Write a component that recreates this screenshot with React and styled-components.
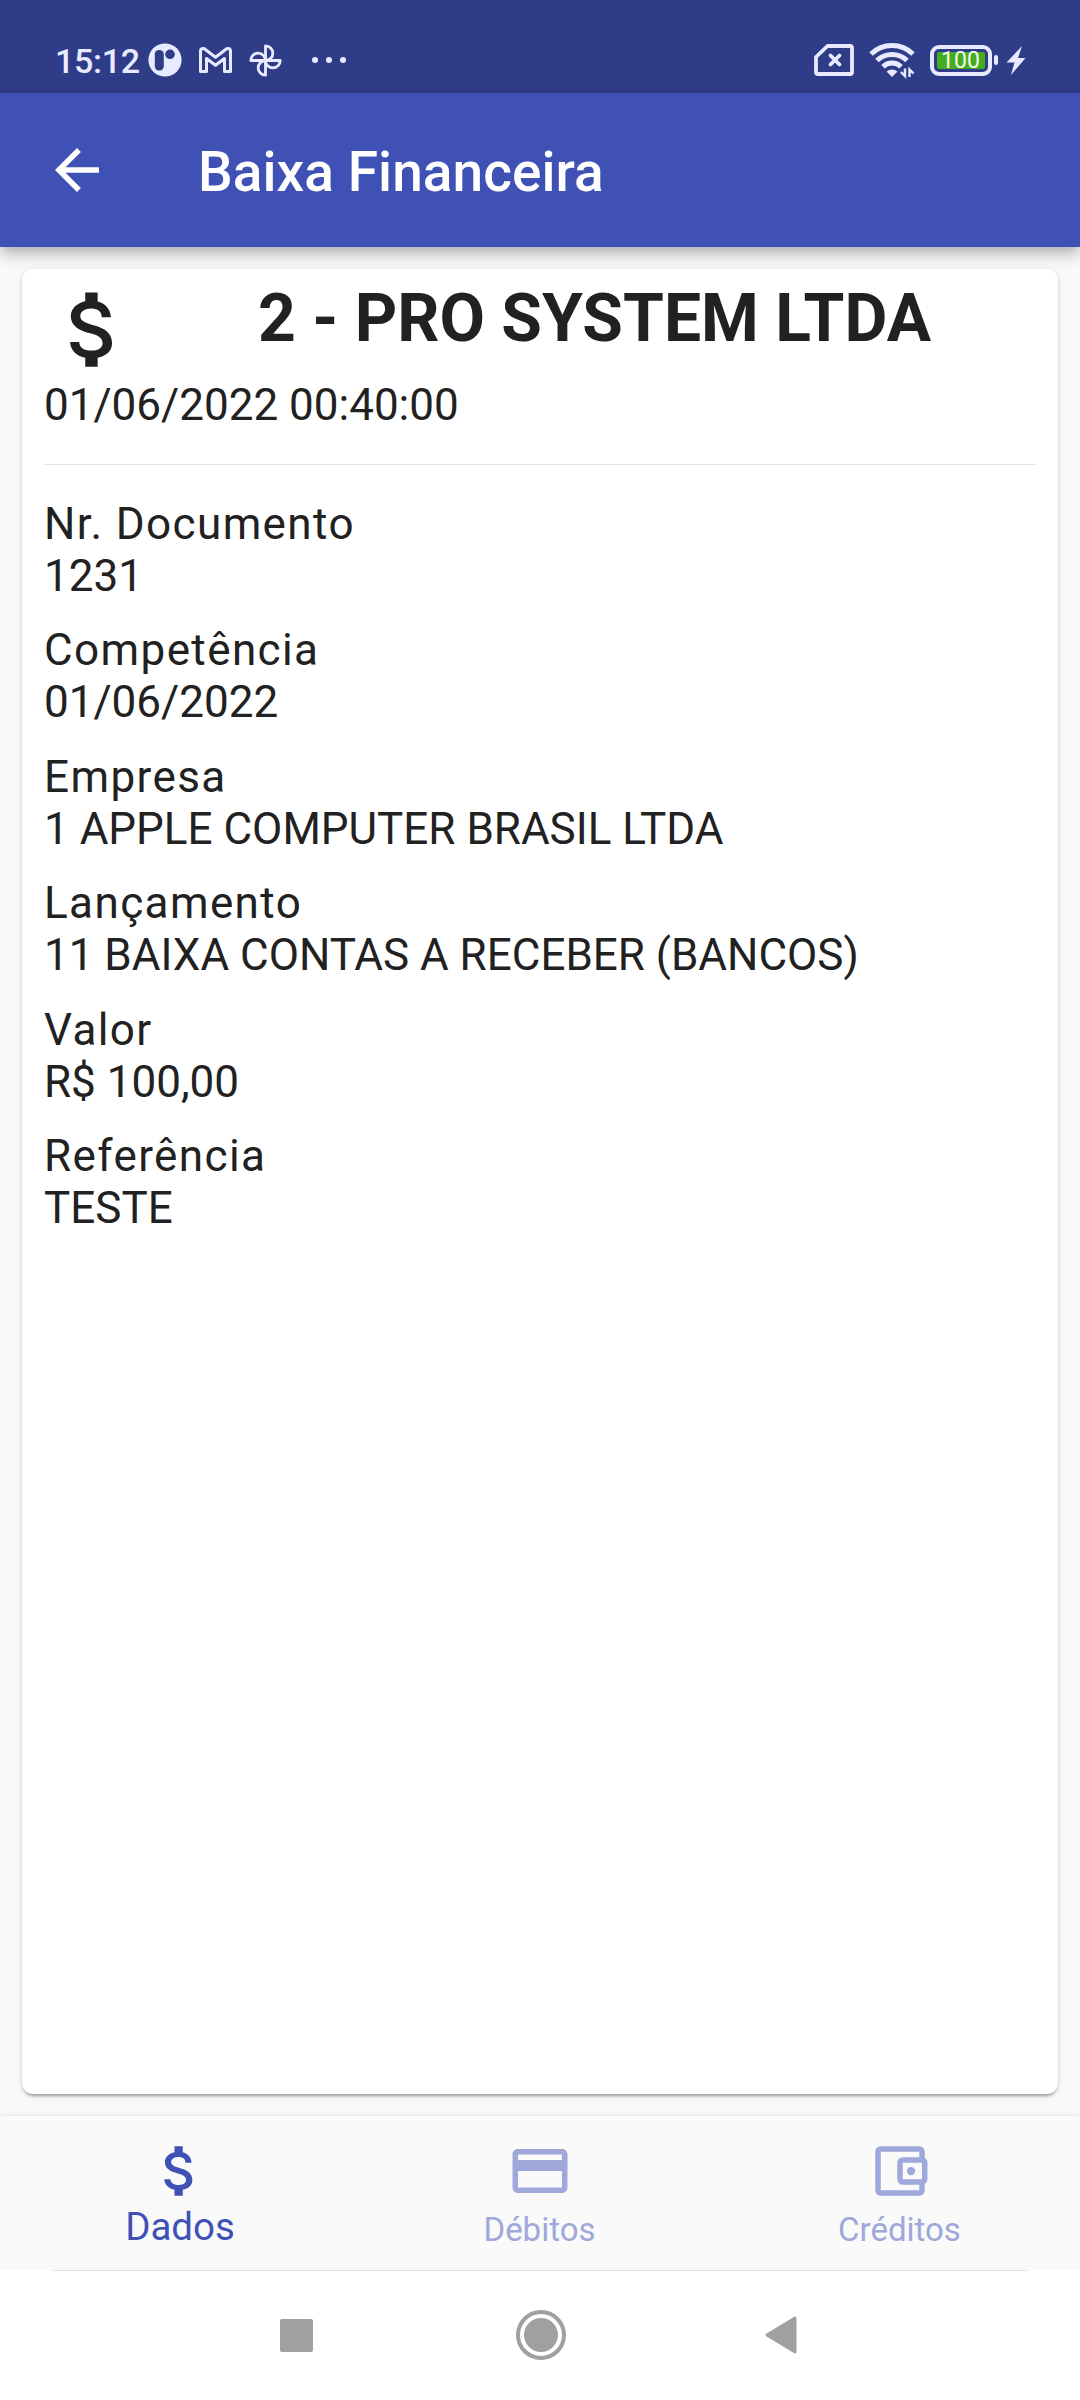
import React from "react";
import styled, { createGlobalStyle } from "styled-components";

const GlobalStyle = createGlobalStyle`
  * { box-sizing: border-box; }
  body {
    margin: 0;
    background: #fafafa;
    font-family: Roboto, "Liberation Sans", sans-serif;
  }
`;

const Screen = styled.div`
  display: flex;
  flex-direction: column;
  width: 1080px;
  height: 2400px;
  overflow: hidden;
  background: #fafafa;
  color: #212121;
`;

const StatusBar = styled.header`
  display: flex;
  justify-content: space-between;
  flex: none;
  height: 93px;
  padding: 43px 54px 0 55px;
  background: #2f3c88;
  color: #e8ebff;
`;

const StatusGroup = styled.div`
  display: flex;
  align-items: center;
  height: 34px;
`;

const Clock = styled.span`
  width: 93px;
  padding-top: 2px;
  font-size: 34px;
  font-weight: 500;
  line-height: 34px;
  letter-spacing: -0.3px;
  white-space: nowrap;
`;

const Glyph = styled.svg`
  display: block;
  flex: none;
  width: ${(p) => p.$w}px;
  height: ${(p) => p.$h}px;
  margin-left: ${(p) => p.$gap || 0}px;
  overflow: visible;
`;

const Battery = styled.div`
  display: flex;
  align-items: center;
  margin-left: 15px;
`;

const BatteryShell = styled.div`
  display: flex;
  width: 62px;
  height: 31px;
  padding: 3px;
  border: 4px solid #e8ebff;
  border-radius: 9px;
`;

const BatteryCharge = styled.div`
  display: flex;
  align-items: center;
  justify-content: center;
  flex: 1;
  border-radius: 2px;
  background: #45ad1c;
  color: #f1fbef;
  font-size: 23px;
  font-weight: 400;
  line-height: 17px;
`;

const BatteryTip = styled.div`
  width: 4px;
  height: 10px;
  margin-left: 2px;
  border-radius: 2px;
  background: #e8ebff;
`;

const AppBar = styled.nav`
  position: relative;
  display: flex;
  align-items: center;
  flex: none;
  gap: 88px;
  height: 154px;
  padding: 0 44px;
  background: #3f51b5;
  color: #fff;
  box-shadow: 0 5px 11px -3px rgba(0, 0, 0, 0.2), 0 11px 14px 0 rgba(0, 0, 0, 0.1), 0 3px 20px 0 rgba(0, 0, 0, 0.1);
`;

const AppTitle = styled.h1`
  margin: 0;
  padding-top: 3px;
  font-size: 55px;
  font-weight: 500;
  line-height: 64px;
  letter-spacing: 0.06px;
`;

const Content = styled.main`
  display: flex;
  flex: 1;
  padding: 22px;
`;

const Card = styled.section`
  flex: 1;
  padding: 11px 22px;
  border-radius: 11px;
  background: #fff;
  box-shadow: 0 5px 3px -3px rgba(0, 0, 0, 0.2), 0 2px 3px 0 rgba(0, 0, 0, 0.14), 0 2px 8px 0 rgba(0, 0, 0, 0.1);
`;

const CardHeader = styled.div`
  display: flex;
  height: 99px;
`;

const PartnerName = styled.h2`
  flex: 1;
  margin: 0 0 0 10px;
  font-size: 66px;
  font-weight: 700;
  line-height: 77px;
  text-align: center;
  white-space: nowrap;
`;

const Timestamp = styled.p`
  margin: 0;
  font-size: 44px;
  line-height: 52px;
`;

const Divider = styled.hr`
  height: 1px;
  margin: 33px 0;
  border: 0;
  background: #e2e2e2;
`;

const Field = styled.div`
  height: 126.4px;
`;

const FieldLabel = styled.div`
  font-size: 44px;
  line-height: 52px;
  letter-spacing: 1.4px;
`;

const FieldValue = styled.div`
  font-size: 44px;
  line-height: 52px;
`;

const TabBar = styled.nav`
  display: flex;
  flex: none;
  height: 154px;
  background: #fafafa;
  box-shadow: 0 -2px 3px rgba(0, 0, 0, 0.07);
`;

const Tab = styled.div`
  display: flex;
  flex: 1;
  flex-direction: column;
  align-items: center;
  padding-top: 22px;
  color: ${(p) => (p.$active ? "#3f51b5" : "#9fa8da")};
`;

const TabLabel = styled.span`
  margin-top: ${(p) => (p.$active ? 0 : 6)}px;
  margin-right: ${(p) => (p.$active ? 0 : 1)}px;
  font-size: ${(p) => (p.$active ? 38.5 : 33)}px;
  line-height: ${(p) => (p.$active ? 45 : 39)}px;
`;

const SystemBar = styled.footer`
  display: flex;
  flex: none;
  flex-direction: column;
  align-items: center;
  height: 130px;
  background: #fff;
`;

const SystemLine = styled.div`
  width: 974px;
  height: 1px;
  background: #e0e0e0;
`;

const SystemButtons = styled.div`
  display: flex;
  align-items: center;
  width: 100%;
  height: 128px;
  padding-left: 279.5px;
`;

const moneyPath =
  "M11.8 10.9c-2.27-.59-3-1.2-3-2.15 0-1.09 1.01-1.85 2.7-1.85 1.78 0 2.44.85 2.5 2.1h2.21c-.07-1.72-1.12-3.3-3.21-3.81V3h-3v2.16c-1.94.42-3.5 1.68-3.5 3.61 0 2.31 1.91 3.46 4.7 4.13 2.5.6 3 1.48 3 2.41 0 .69-.49 1.79-2.7 1.79-2.06 0-2.87-.92-2.98-2.1h-2.2c.12 2.19 1.76 3.42 3.68 3.83V21h3v-2.15c1.95-.37 3.5-1.5 3.5-3.55 0-2.84-2.43-3.81-4.7-4.4z";

const MoneyIcon = ({ size }) => (
  <Glyph $w={size} $h={size} viewBox="0 0 24 24" fill="currentColor">
    <path d={moneyPath} />
  </Glyph>
);

const CardIcon = () => (
  <Glyph $w={66} $h={66} viewBox="0 0 24 24" fill="currentColor">
    <path d="M20 4H4c-1.11 0-1.99.89-1.99 2L2 18c0 1.11.89 2 2 2h16c1.11 0 2-.89 2-2V6c0-1.11-.89-2-2-2zm0 14H4v-6h16v6zm0-10H4V6h16v2z" />
  </Glyph>
);

const WalletIcon = () => (
  <Glyph $w={66} $h={66} viewBox="0 0 24 24" fill="none" stroke="currentColor" strokeWidth="2">
    <path d="M20 7.5V5a1 1 0 0 0-1-1H5a1 1 0 0 0-1 1v14a1 1 0 0 0 1 1h14a1 1 0 0 0 1-1v-2.5" />
    <rect x="12" y="8" width="9" height="8" rx="1" />
    <circle cx="16" cy="12" r="1.5" fill="currentColor" stroke="none" />
  </Glyph>
);

const fields = [
  ["Nr. Documento", "1231"],
  ["Competência", "01/06/2022"],
  ["Empresa", "1 APPLE COMPUTER BRASIL LTDA"],
  ["Lançamento", "11 BAIXA CONTAS A RECEBER (BANCOS)"],
  ["Valor", "R$ 100,00"],
  ["Referência", "TESTE"],
];

export default function App() {
  return (
    <Screen>
      <GlobalStyle />
      <StatusBar>
        <StatusGroup>
          <Clock>15:12</Clock>
          <Glyph $w={34} $h={34} viewBox="0 0 34 34">
            <circle cx="17" cy="17" r="16.6" fill="currentColor" />
            <rect x="6.8" y="7" width="9" height="20.5" rx="4.2" fill="#2f3c88" />
            <circle cx="22" cy="11.3" r="4.8" fill="#2f3c88" />
          </Glyph>
          <Glyph $w={33} $h={26} $gap={17} viewBox="0 0 33 26" fill="none" stroke="currentColor" strokeWidth="3" strokeLinejoin="round">
            <path d="M1.5 24.5V4.2Q1.5 1.5 4.3 1.5H5L16.5 10.3 28 1.5h.7Q31.5 1.5 31.5 4.2V24.5H25.5V11.5L16.5 18.3 7.5 11.5V24.5z" />
          </Glyph>
          <Glyph $w={33} $h={33} $gap={17} viewBox="0 0 33 33" fill="none" stroke="currentColor" strokeWidth="2.8" strokeLinejoin="round">
            {[0, 90, 180, 270].map((a) => (
              <path key={a} transform={`rotate(${a} 16.5 16.5)`} d="M16.5 16.5V1.8A7.35 7.35 0 0 1 16.5 16.5" />
            ))}
          </Glyph>
          <Glyph $w={36} $h={8} $gap={29} viewBox="0 0 36 8" fill="currentColor">
            <circle cx="4" cy="4" r="3" />
            <circle cx="18" cy="4" r="3" />
            <circle cx="32" cy="4" r="3" />
          </Glyph>
        </StatusGroup>
        <StatusGroup>
          <Glyph $w={40} $h={32} viewBox="0 0 40 32" fill="none" stroke="currentColor" strokeWidth="3.8" strokeLinejoin="round">
            <path d="M13.5 2H36a2 2 0 0 1 2 2v24a2 2 0 0 1-2 2H4a2 2 0 0 1-2-2V13z" />
            <path d="M16.5 11.5l9 9M25.5 11.5l-9 9" strokeLinecap="round" />
          </Glyph>
          <Glyph $w={46} $h={34} $gap={15} viewBox="0 0 46 34" fill="none" stroke="currentColor" strokeWidth="5">
            <path d="M2 11A30 30 0 0 1 44 11M8 17.5A21.5 21.5 0 0 1 38 17.5M14 23.7A13 13 0 0 1 32 23.7" />
            <path d="M17.5 28.5Q23 24.5 28.5 28.5L23 34z" fill="currentColor" stroke="none" />
            <path d="M36 25.5v7.5l-4-4M40.500 34v-7.500l4 4" strokeWidth="2.4" />
          </Glyph>
          <Battery>
            <BatteryShell>
              <BatteryCharge>100</BatteryCharge>
            </BatteryShell>
            <BatteryTip />
          </Battery>
          <Glyph $w={20} $h={29} $gap={8.5} viewBox="0 0 19 29" fill="currentColor">
            <path d="M15.500 0L0 16.500h8L4.500 29 19 12h-7.500z" />
          </Glyph>
        </StatusGroup>
      </StatusBar>
      <AppBar>
        <Glyph $w={66} $h={66} viewBox="0 0 24 24" fill="currentColor">
          <path d="M20 11H7.830l5.590-5.590L12 4l-8 8 8 8 1.410-1.410L7.830 13H20v-2z" />
        </Glyph>
        <AppTitle>Baixa Financeira</AppTitle>
      </AppBar>
      <Content>
        <Card>
          <CardHeader>
            <MoneyIcon size={99} />
            <PartnerName>2 - PRO SYSTEM LTDA</PartnerName>
          </CardHeader>
          <Timestamp>01/06/2022 00:40:00</Timestamp>
          <Divider />
          {fields.map(([label, value]) => (
            <Field key={label}>
              <FieldLabel>{label}</FieldLabel>
              <FieldValue>{value}</FieldValue>
            </Field>
          ))}
        </Card>
      </Content>
      <TabBar>
        <Tab $active>
          <MoneyIcon size={66} />
          <TabLabel $active>Dados</TabLabel>
        </Tab>
        <Tab>
          <CardIcon />
          <TabLabel>Débitos</TabLabel>
        </Tab>
        <Tab>
          <WalletIcon />
          <TabLabel>Créditos</TabLabel>
        </Tab>
      </TabBar>
      <SystemBar>
        <SystemLine />
        <SystemButtons>
          <Glyph $w={33} $h={33} viewBox="0 0 33 33">
            <rect width="33" height="33" rx="2" fill="#a0a0a0" />
          </Glyph>
          <Glyph $w={50} $h={50} $gap={203} viewBox="0 0 50 50">
            <circle cx="25" cy="25" r="23" fill="none" stroke="#a0a0a0" strokeWidth="4" />
            <circle cx="25" cy="25" r="17" fill="#a0a0a0" />
          </Glyph>
          <Glyph $w={32} $h={38} $gap={199} viewBox="0 0 32 38">
            <path d="M2 19L30 2v34z" fill="#a0a0a0" stroke="#a0a0a0" strokeWidth="3" strokeLinejoin="round" />
          </Glyph>
        </SystemButtons>
      </SystemBar>
    </Screen>
  );
}
